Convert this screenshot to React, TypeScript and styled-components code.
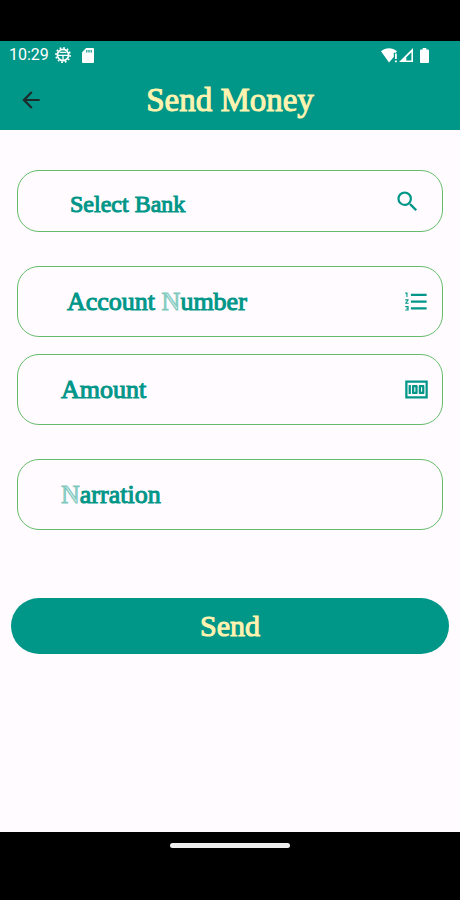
import React from "react";
import styled, { createGlobalStyle } from "styled-components";
import { MdArrowBack, MdFormatListNumbered, MdMoney, MdSearch } from "react-icons/md";

const teal = "#009688";
const cream = "#fff3b0";
const paper = "#fffbff";
const serif = `"Liberation Serif", "Times New Roman", serif`;

const GlobalStyle = createGlobalStyle`
  *, *::before, *::after { box-sizing: border-box; }
  body { margin: 0; background: #000; }
  button, input { font: inherit; }
`;

const Screen = styled.div`
  display: flex;
  flex-direction: column;
  min-height: 100vh;
  padding-top: 41px;
  background: #000;
  font-family: ${serif};
`;

const StatusBar = styled.div`
  display: flex;
  align-items: center;
  justify-content: space-between;
  height: 28px;
  padding: 0 31px 0 9px;
  background: ${teal};
  color: #fff;
  font: 16px/28px Roboto, sans-serif;
`;

const StatusGroup = styled.div`
  display: flex;
  align-items: center;
  svg { display: block; }
`;

const LeftStatus = styled(StatusGroup)`
  gap: 6px;
  svg + svg { margin-left: 5px; }
`;

const RightStatus = styled(StatusGroup)`
  gap: 1px;
  svg:last-child { margin-left: 6px; }
`;

const AppBar = styled.header`
  display: grid;
  grid-template-columns: 48px 1fr 48px;
  align-items: center;
  height: 61px;
  padding: 0 7px;
  background: ${teal};
`;

const BackButton = styled.button`
  display: grid;
  place-items: center;
  width: 48px;
  height: 48px;
  padding: 0;
  border: 0;
  background: none;
  color: #1c2b2b;
`;

const Title = styled.h1`
  margin: 0;
  color: ${cream};
  font-size: 33px;
  font-weight: 400;
  line-height: 40px;
  text-align: center;
  -webkit-text-stroke: 1px ${cream};
`;

const Form = styled.form`
  display: flex;
  flex: 1;
  flex-direction: column;
  padding: 40px 11px;
  background: ${paper};
`;

const Fields = styled.div`
  display: flex;
  flex-direction: column;
  gap: 34px;
  margin: 0 6px 68px;
`;

const FieldPair = styled.div`
  display: flex;
  flex-direction: column;
  gap: 17px;
`;

const boxStyle = `
  display: flex;
  align-items: center;
  width: 100%;
  border: 1px solid #66bb6a;
  border-radius: 22px;
  background: transparent;
  color: ${teal};
  line-height: 32px;
  svg { flex: none; }
`;

const BankButton = styled.button`
  ${boxStyle}
  justify-content: space-between;
  height: 62px;
  padding: 0 21px 0 52px;
  font-size: 24px;
  text-align: left;
`;

const BankText = styled.span`
  padding-top: 6px;
  -webkit-text-stroke: 1px ${teal};
`;

const Field = styled.div<{ $indent: number }>`
  ${boxStyle}
  height: 71px;
  padding: 0 12px 0 ${({ $indent }) => $indent}px;
  font-size: 26px;
`;

const Label = styled.label`
  flex: none;
  -webkit-text-stroke: 1px ${teal};
`;

const PaleLetter = styled.span`
  color: #c5e8e3;
  -webkit-text-stroke: 1px #7cc8bd;
`;

const TextInput = styled.input`
  flex: 1;
  min-width: 0;
  height: 48px;
  padding: 0 8px;
  border: 0;
  outline: 0;
  background: transparent;
  color: ${teal};
`;

const SendButton = styled.button`
  height: 56px;
  border: 0;
  border-radius: 28px;
  background: ${teal};
  color: ${cream};
  font-size: 30px;
  line-height: 40px;
  -webkit-text-stroke: 1px ${cream};
`;

const NavigationBar = styled.footer`
  display: flex;
  justify-content: center;
  height: 68px;
  padding-top: 11px;
  background: #000;
`;

const HomeHandle = styled.div`
  width: 120px;
  height: 5px;
  border-radius: 3px;
  background: #eee;
`;

const GearIcon = () => (
  <svg width="16" height="16" viewBox="0 0 16 16" fill="none" stroke="#fff" aria-hidden="true">
    <circle cx="8" cy="8" r="5.6" strokeWidth="1.7" />
    <circle cx="8" cy="8" r="7.1" strokeWidth="1.6" strokeDasharray="1.8 1.918" />
    <path d="M2.5 8.4h11M4.6 5.4h6.8M8 8v5.5" strokeWidth="1.3" />
  </svg>
);

const CardIcon = () => (
  <svg width="12" height="15" viewBox="0 0 12 15" aria-hidden="true">
    <path d="M4.2 0H11a1 1 0 0 1 1 1v13a1 1 0 0 1-1 1H1a1 1 0 0 1-1-1V4.2Z" fill="#fff" />
    <path d="M4.8 2v2.4M7 2v2.4M9.2 2v2.4" stroke={teal} strokeWidth="1.2" />
  </svg>
);

const WifiIcon = () => (
  <svg width="17" height="15" viewBox="0 0 17 15" aria-hidden="true">
    <path d="M0 3.2C4.6-.7 11.4-.7 16 3.2L14.8 4.8h-2v4.1L8 14.6Z" fill="#fff" />
    <path d="M14 5.5h1.8V11H14zM14 12.5h1.8v1.8H14z" fill="#fff" />
  </svg>
);

const SignalIcon = () => (
  <svg width="14" height="14" viewBox="0 0 14 14" aria-hidden="true">
    <path fillRule="evenodd" d="M14 0v14H0ZM12.4 4.2 7.3 9.3v3.1h5.1Z" fill="#fff" />
  </svg>
);

const BatteryIcon = () => (
  <svg width="9" height="15" viewBox="0 0 9 15" aria-hidden="true">
    <path d="M2.7 0h3.6v1.5H8a1 1 0 0 1 1 1V14a1 1 0 0 1-1 1H1a1 1 0 0 1-1-1V2.5a1 1 0 0 1 1-1h1.7Z" fill="#fff" />
  </svg>
);

export default function App() {
  return (
    <>
      <GlobalStyle />
      <Screen>
        <StatusBar>
          <LeftStatus>
            <span>10:29</span>
            <GearIcon />
            <CardIcon />
          </LeftStatus>
          <RightStatus>
            <WifiIcon />
            <SignalIcon />
            <BatteryIcon />
          </RightStatus>
        </StatusBar>
        <AppBar>
          <BackButton type="button" aria-label="Back">
            <MdArrowBack size={26} />
          </BackButton>
          <Title>Send Money</Title>
        </AppBar>
        <Form onSubmit={(event) => event.preventDefault()}>
          <Fields>
            <BankButton type="button">
              <BankText>Select Bank</BankText>
              <MdSearch size={27} />
            </BankButton>
            <FieldPair>
              <Field $indent={49}>
                <Label htmlFor="account">
                  Account <PaleLetter>N</PaleLetter>umber
                </Label>
                <TextInput id="account" inputMode="numeric" />
                <MdFormatListNumbered size={27} />
              </Field>
              <Field $indent={43}>
                <Label htmlFor="amount">Amount</Label>
                <TextInput id="amount" inputMode="decimal" />
                <MdMoney size={27} />
              </Field>
            </FieldPair>
            <Field $indent={43}>
              <Label htmlFor="narration">
                <PaleLetter>N</PaleLetter>arration
              </Label>
              <TextInput id="narration" />
            </Field>
          </Fields>
          <SendButton type="submit">Send</SendButton>
        </Form>
        <NavigationBar>
          <HomeHandle />
        </NavigationBar>
      </Screen>
    </>
  );
}
